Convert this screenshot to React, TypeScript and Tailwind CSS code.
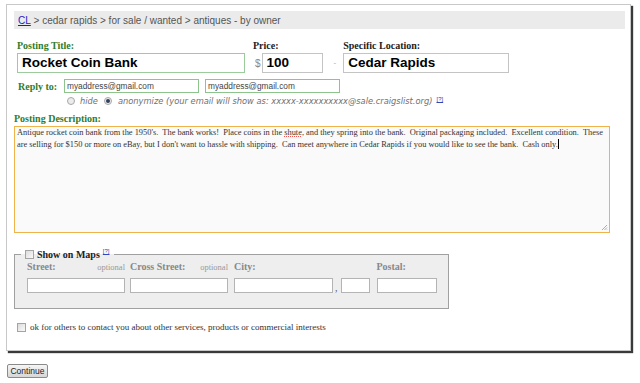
import React from "react";

const serif = "font-['Liberation_Serif',serif]";
const sans = "font-['Liberation_Sans',Arial,sans-serif]";

function Check() {
  return (
    <span className="inline-block w-[9px] h-[9px] border border-[#a4a4a4] bg-linear-to-br from-[#dcdcdc] to-[#fafafa] shrink-0" />
  );
}

function Radio({ on }: { on?: boolean }) {
  return (
    <span className="inline-flex items-center justify-center w-[8px] h-[8px] rounded-full border border-[#a8a8a8] bg-[#ececec] shrink-0">
      {on && <span className="w-[4px] h-[4px] rounded-full bg-[#34405a]" />}
    </span>
  );
}

function Help({ cls }: { cls: string }) {
  return (
    <span className={`${sans} not-italic text-[6px] leading-[6px] text-[#3344bb] underline self-start ${cls}`}>[?]</span>
  );
}

export default function App() {
  return (
    <div className="w-[640px] h-[383px] bg-white overflow-hidden">
      <div className="ml-[6px] mt-[4px] w-[625px] h-[347px] border border-[#c8c8c8] shadow-[2px_2px_1px_#3a3a3a] pl-[7px] pr-[5px] pt-[6px] flex flex-col">
        {/* breadcrumb */}
        <div className={`${sans} h-[18px] bg-[#ebebeb] flex items-center pl-[4px] text-[10px] text-[#555]`}>
          <span className="text-[#1a1acc] underline">CL</span>
          <span className="whitespace-pre">{" > cedar rapids > for sale / wanted > antiques - by owner"}</span>
        </div>

        {/* title / price / location */}
        <div className="flex mt-[11px] ml-[3px]">
          <div className="flex flex-col w-[228px]">
            <div className={`${serif} text-[10px] leading-[11px] font-bold text-[#2e7d2e]`}>Posting Title:</div>
            <div className={`${sans} mt-[2px] h-[20px] border border-[#9ccc9c] flex items-center pl-[4px] text-[13.5px] font-bold text-black`}>
              Rocket Coin Bank
            </div>
          </div>
          <div className="ml-[8px] flex flex-col">
            <div className={`${serif} text-[10px] leading-[11px] font-bold text-[#222]`}>Price:</div>
            <div className="mt-[2px] flex items-end">
              <span className={`${sans} text-[10px] text-[#888] pl-[2px] mb-[2px]`}>$</span>
              <div className={`${sans} ml-[1px] w-[61px] h-[20px] border border-[#c4c4c4] flex items-center pl-[4px] text-[13.5px] font-bold text-black`}>
                100
              </div>
            </div>
          </div>
          <div className={`${sans} ml-[11px] mt-[17px] text-[8px] text-[#aaa]`}>-</div>
          <div className="ml-[7px] flex flex-col">
            <div className={`${serif} text-[10px] leading-[11px] font-bold text-[#222]`}>Specific Location:</div>
            <div className={`${sans} mt-[2px] w-[166px] h-[20px] border border-[#c4c4c4] flex items-center pl-[4px] text-[13.5px] font-bold text-black`}>
              Cedar Rapids
            </div>
          </div>
        </div>

        {/* reply to */}
        <div className="flex items-center mt-[6px] ml-[4px]">
          <div className={`${serif} w-[46px] text-[10px] leading-[11px] font-bold text-[#2e7d2e]`}>Reply to:</div>
          <div className={`${sans} w-[135px] h-[14px] border border-[#8cc48c] flex items-center pl-[2px] text-[8.3px] text-[#444]`}>
            myaddress@gmail.com
          </div>
          <div className={`${sans} ml-[6px] w-[135px] h-[14px] border border-[#8cc48c] flex items-center pl-[2px] text-[8.3px] text-[#444]`}>
            myaddress@gmail.com
          </div>
        </div>

        {/* radios */}
        <div className="flex items-center mt-[3px] ml-[53px] h-[10px] font-['DejaVu_Sans',sans-serif] italic text-[8.3px] text-[#707070]">
          <Radio />
          <span className="ml-[5px]">hide</span>
          <span className="ml-[6px] flex"><Radio on /></span>
          <span className="ml-[6px] whitespace-pre">anonymize (your email will show as: xxxxx-xxxxxxxxxx@sale.craigslist.org)</span>
          <Help cls="ml-[4px]" />
        </div>

        {/* description */}
        <div className={`${serif} mt-[7px] text-[10px] leading-[11px] font-bold text-[#2e7d2e]`}>Posting Description:</div>
        <div className={`${serif} relative mt-[2px] w-[596px] h-[107px] border border-[#efb34c] bg-[#fafafa] px-[2px] pt-[0px] text-[8.4px] leading-[11.5px] text-[#333] whitespace-pre`}>
          <div>
            {"Antique rocket coin bank from the 1950's.  The bank works!  Place coins in the "}
            <span className="underline decoration-dotted decoration-[#e55] underline-offset-1">shute</span>
            {", and they spring into the bank.  Original packaging included.  Excellent condition.  These"}
          </div>
          <div className="flex items-center">
            <span>{"are selling for $150 or more on eBay, but I don't want to hassle with shipping.  Can meet anywhere in Cedar Rapids if you would like to see the bank.  Cash only."}</span>
            <span className="inline-block w-px h-[10px] bg-black" />
          </div>
          <svg className="absolute right-[1px] bottom-[1px]" width="7" height="7" viewBox="0 0 7 7">
            <path d="M6 1L1 6M6 3.5L3.5 6M6 5.5L5.5 6" stroke="#999" strokeWidth="0.8" />
          </svg>
        </div>

        {/* map fieldset */}
        <fieldset className="mt-[16px] w-[435px] border border-[#a0a0a0] bg-[#eeeeee] pb-[15px]">
          <legend className="ml-[6px] px-[4px] text-[10px] leading-[11px]">
            <span className="flex items-center h-[11px]">
              <Check />
              <span className={`${serif} ml-[3px] text-[10px] leading-[11px] font-bold text-[#222]`}>Show on Maps</span>
              <Help cls="ml-[3px] mr-[1px] -mt-[1px]" />
            </span>
          </legend>
          <div className={`${serif} flex items-end pl-[12px] mt-[1px]`}>
            <div className="flex flex-col w-[98px]">
              <div className="flex items-baseline justify-between">
                <span className="text-[10px] leading-[12px] font-bold text-[#888]">Street:</span>
                <span className="text-[8.5px] leading-[12px] text-[#999]">optional</span>
              </div>
              <div className="mt-[5px] w-[98px] h-[15px] border border-[#b4b4b4] bg-white" />
            </div>
            <div className="ml-[5px] flex flex-col w-[98px]">
              <div className="flex items-baseline justify-between">
                <span className="text-[10px] leading-[12px] font-bold text-[#888]">Cross Street:</span>
                <span className="text-[8.5px] leading-[12px] text-[#999]">optional</span>
              </div>
              <div className="mt-[5px] w-[98px] h-[15px] border border-[#b4b4b4] bg-white" />
            </div>
            <div className="ml-[6px] flex flex-col">
              <div className="flex items-baseline">
                <span className="text-[10px] leading-[12px] font-bold text-[#888]">City:</span>
              </div>
              <div className="mt-[5px] flex items-end">
                <div className="w-[99px] h-[15px] border border-[#b4b4b4] bg-white" />
                <span className="ml-[2px] text-[10px] leading-[10px] text-[#555]">,</span>
                <div className="ml-[3px] w-[29px] h-[15px] border border-[#b4b4b4] bg-white" />
              </div>
            </div>
            <div className="ml-[7px] flex flex-col">
              <span className="text-[10px] leading-[12px] font-bold text-[#888]">Postal:</span>
              <div className="mt-[5px] w-[60px] h-[15px] border border-[#b4b4b4] bg-white" />
            </div>
          </div>
        </fieldset>

        {/* contact checkbox */}
        <div className="flex items-center mt-[12px] ml-[3px]">
          <Check />
          <span className={`${serif} ml-[4px] text-[9px] text-[#333]`}>
            ok for others to contact you about other services, products or commercial interests
          </span>
        </div>
      </div>

      <div className="ml-[7px] mt-[13px]">
        <button className={`${sans} h-[14px] w-[41px] border border-[#8a8a8a] rounded-[2px] bg-linear-to-b from-[#f6f6f6] to-[#d6d6d6] text-[8.5px] leading-[12px] text-[#222] flex items-center justify-center`}>
          Continue
        </button>
      </div>
    </div>
  );
}
